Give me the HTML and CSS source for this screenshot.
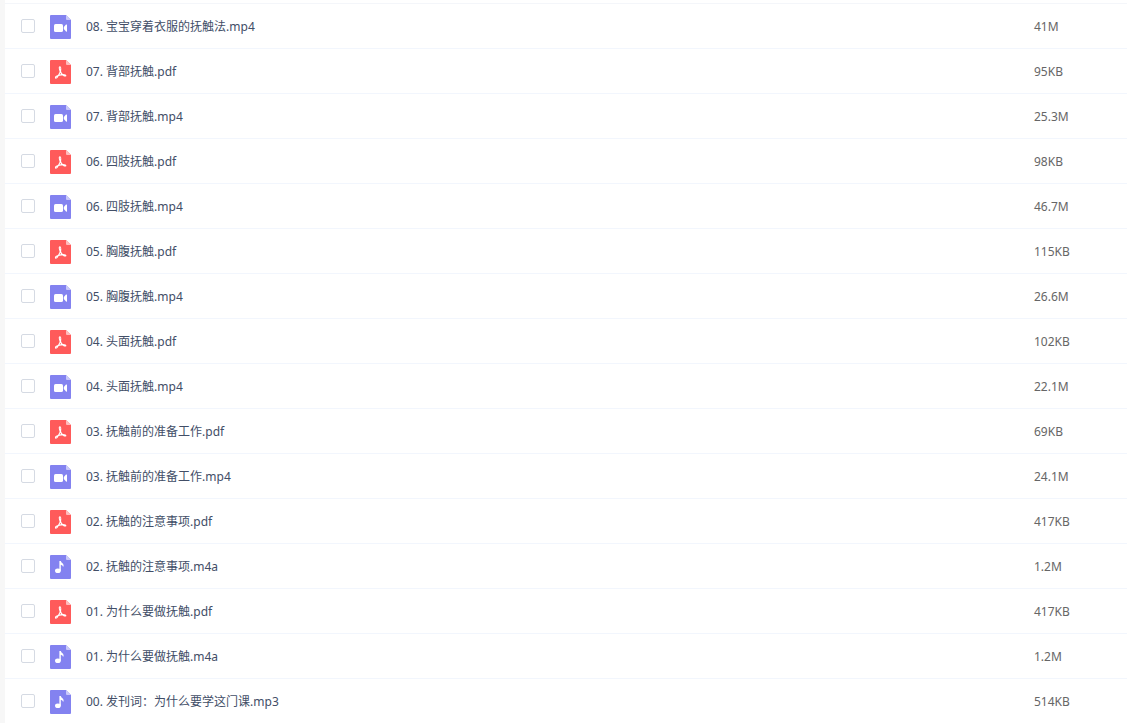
FILE: index.html
```
<!DOCTYPE html>
<html lang="zh-CN">
<head>
    <meta charset="UTF-8">
    <meta name="viewport" content="width=device-width, initial-scale=1.0">
    <title>文件列表</title>
    <link rel="stylesheet" href="styles.css">
</head>
<body>
    <!-- file type icons -->
    <svg class="icon-defs" aria-hidden="true">
        <symbol id="icon-video" viewBox="0 0 21 24">
            <path fill="#8382f0" d="M1 0H16L21 5V23Q21 24 20 24H1Q0 24 0 23V1Q0 0 1 0Z"/>
            <path fill="#c9c8fa" d="M16 0L21 5H17Q16 5 16 4Z"/>
            <rect fill="#fff" x="4" y="9" width="9" height="8" rx="1.6"/>
            <path fill="#fff" d="M13.8 12L16 9.6Q17 9 17 10V16Q17 17 16 16.4L13.8 14Z"/>
        </symbol>
        <symbol id="icon-pdf" viewBox="0 0 21 24">
            <path fill="#ff5a5a" d="M1 0H16L21 5V23Q21 24 20 24H1Q0 24 0 23V1Q0 0 1 0Z"/>
            <path fill="#ffbcbc" d="M16 0L21 5H17Q16 5 16 4Z"/>
            <path fill="none" stroke="#fff" stroke-width="1.1" stroke-linecap="round" stroke-linejoin="round" d="M10 6.8Q8.9 6.8 9.5 9Q10 10.6 10.2 12L8.4 15.4Q6.7 18.6 5.7 18.2Q5 17.3 6.5 16.3Q9 14.8 13 14.6Q16.2 14.7 15.8 15.8Q15 16.6 13 15Q11 13.5 10.5 11.5Q11.2 7 10 6.8Z"/>
        </symbol>
        <symbol id="icon-audio" viewBox="0 0 21 24">
            <path fill="#8382f0" d="M1 0H16L21 5V23Q21 24 20 24H1Q0 24 0 23V1Q0 0 1 0Z"/>
            <path fill="#c9c8fa" d="M16 0L21 5H17Q16 5 16 4Z"/>
            <ellipse fill="#fff" cx="7.9" cy="15.7" rx="2.9" ry="2.3"/>
            <path fill="#fff" d="M9.4 6H10.8Q11.2 7.8 13 8.8Q14.2 10 13.2 12Q12.8 10.2 10.8 9.8V15.7H9.4Z"/>
        </symbol>
    </svg>

    <main class="file-list">
        <table class="file-table">
            <tbody>
                <tr>
                    <td class="check"><input type="checkbox" id="file-1"></td>
                    <td class="type"><svg class="icon"><use href="#icon-video"/></svg></td>
                    <td class="name"><label for="file-1">08. 宝宝穿着衣服的抚触法.mp4</label></td>
                    <td class="size">41M</td>
                </tr>
                <tr>
                    <td class="check"><input type="checkbox" id="file-2"></td>
                    <td class="type"><svg class="icon"><use href="#icon-pdf"/></svg></td>
                    <td class="name"><label for="file-2">07. 背部抚触.pdf</label></td>
                    <td class="size">95KB</td>
                </tr>
                <tr>
                    <td class="check"><input type="checkbox" id="file-3"></td>
                    <td class="type"><svg class="icon"><use href="#icon-video"/></svg></td>
                    <td class="name"><label for="file-3">07. 背部抚触.mp4</label></td>
                    <td class="size">25.3M</td>
                </tr>
                <tr>
                    <td class="check"><input type="checkbox" id="file-4"></td>
                    <td class="type"><svg class="icon"><use href="#icon-pdf"/></svg></td>
                    <td class="name"><label for="file-4">06. 四肢抚触.pdf</label></td>
                    <td class="size">98KB</td>
                </tr>
                <tr>
                    <td class="check"><input type="checkbox" id="file-5"></td>
                    <td class="type"><svg class="icon"><use href="#icon-video"/></svg></td>
                    <td class="name"><label for="file-5">06. 四肢抚触.mp4</label></td>
                    <td class="size">46.7M</td>
                </tr>
                <tr>
                    <td class="check"><input type="checkbox" id="file-6"></td>
                    <td class="type"><svg class="icon"><use href="#icon-pdf"/></svg></td>
                    <td class="name"><label for="file-6">05. 胸腹抚触.pdf</label></td>
                    <td class="size">115KB</td>
                </tr>
                <tr>
                    <td class="check"><input type="checkbox" id="file-7"></td>
                    <td class="type"><svg class="icon"><use href="#icon-video"/></svg></td>
                    <td class="name"><label for="file-7">05. 胸腹抚触.mp4</label></td>
                    <td class="size">26.6M</td>
                </tr>
                <tr>
                    <td class="check"><input type="checkbox" id="file-8"></td>
                    <td class="type"><svg class="icon"><use href="#icon-pdf"/></svg></td>
                    <td class="name"><label for="file-8">04. 头面抚触.pdf</label></td>
                    <td class="size">102KB</td>
                </tr>
                <tr>
                    <td class="check"><input type="checkbox" id="file-9"></td>
                    <td class="type"><svg class="icon"><use href="#icon-video"/></svg></td>
                    <td class="name"><label for="file-9">04. 头面抚触.mp4</label></td>
                    <td class="size">22.1M</td>
                </tr>
                <tr>
                    <td class="check"><input type="checkbox" id="file-10"></td>
                    <td class="type"><svg class="icon"><use href="#icon-pdf"/></svg></td>
                    <td class="name"><label for="file-10">03. 抚触前的准备工作.pdf</label></td>
                    <td class="size">69KB</td>
                </tr>
                <tr>
                    <td class="check"><input type="checkbox" id="file-11"></td>
                    <td class="type"><svg class="icon"><use href="#icon-video"/></svg></td>
                    <td class="name"><label for="file-11">03. 抚触前的准备工作.mp4</label></td>
                    <td class="size">24.1M</td>
                </tr>
                <tr>
                    <td class="check"><input type="checkbox" id="file-12"></td>
                    <td class="type"><svg class="icon"><use href="#icon-pdf"/></svg></td>
                    <td class="name"><label for="file-12">02. 抚触的注意事项.pdf</label></td>
                    <td class="size">417KB</td>
                </tr>
                <tr>
                    <td class="check"><input type="checkbox" id="file-13"></td>
                    <td class="type"><svg class="icon"><use href="#icon-audio"/></svg></td>
                    <td class="name"><label for="file-13">02. 抚触的注意事项.m4a</label></td>
                    <td class="size">1.2M</td>
                </tr>
                <tr>
                    <td class="check"><input type="checkbox" id="file-14"></td>
                    <td class="type"><svg class="icon"><use href="#icon-pdf"/></svg></td>
                    <td class="name"><label for="file-14">01. 为什么要做抚触.pdf</label></td>
                    <td class="size">417KB</td>
                </tr>
                <tr>
                    <td class="check"><input type="checkbox" id="file-15"></td>
                    <td class="type"><svg class="icon"><use href="#icon-audio"/></svg></td>
                    <td class="name"><label for="file-15">01. 为什么要做抚触.m4a</label></td>
                    <td class="size">1.2M</td>
                </tr>
                <tr>
                    <td class="check"><input type="checkbox" id="file-16"></td>
                    <td class="type"><svg class="icon"><use href="#icon-audio"/></svg></td>
                    <td class="name"><label for="file-16">00. 发刊词：为什么要学这门课.mp3</label></td>
                    <td class="size">514KB</td>
                </tr>
            </tbody>
        </table>
    </main>
</body>
</html>
```
FILE: styles.css
```
* {
    box-sizing: border-box;
}
body {
    margin: 0;
    background-color: #fff;
    color: #424e67;
    font-family: "Noto Sans", "Noto Sans CJK SC", sans-serif;
    font-size: 12px;
    line-height: 18px;
}
.icon-defs {
    display: none;
}
.file-list {
    min-height: 100vh;
    padding-top: 3px;
    border-left: 5px solid #f7f7f7;
}
.file-table {
    width: 100%;
    table-layout: fixed;
    border-spacing: 0;
    border-top: 1px solid #f4f6fa;
}
.file-table td {
    height: 45px;
    padding: 2px 0 0;
    border-bottom: 1px solid #f2f6fd;
    vertical-align: middle;
}
.file-table tr:last-child td {
    height: 44px;
    border-bottom: none;
}
.file-table .check {
    width: 45px;
    padding: 0 0 0 16px;
}
.check input {
    display: block;
    appearance: none;
    width: 14px;
    height: 14px;
    margin: 0;
    border: 1px solid #d5dae3;
    border-radius: 2px;
    background-color: #fff;
    cursor: pointer;
}
.check input:checked {
    background-color: #8382f0;
    border-color: #8382f0;
}
.file-table .type {
    width: 36px;
}
.icon {
    display: block;
    width: 21px;
    height: 24px;
}
.name label {
    cursor: pointer;
}
.file-table .size {
    width: 93px;
    color: #666;
}
```
